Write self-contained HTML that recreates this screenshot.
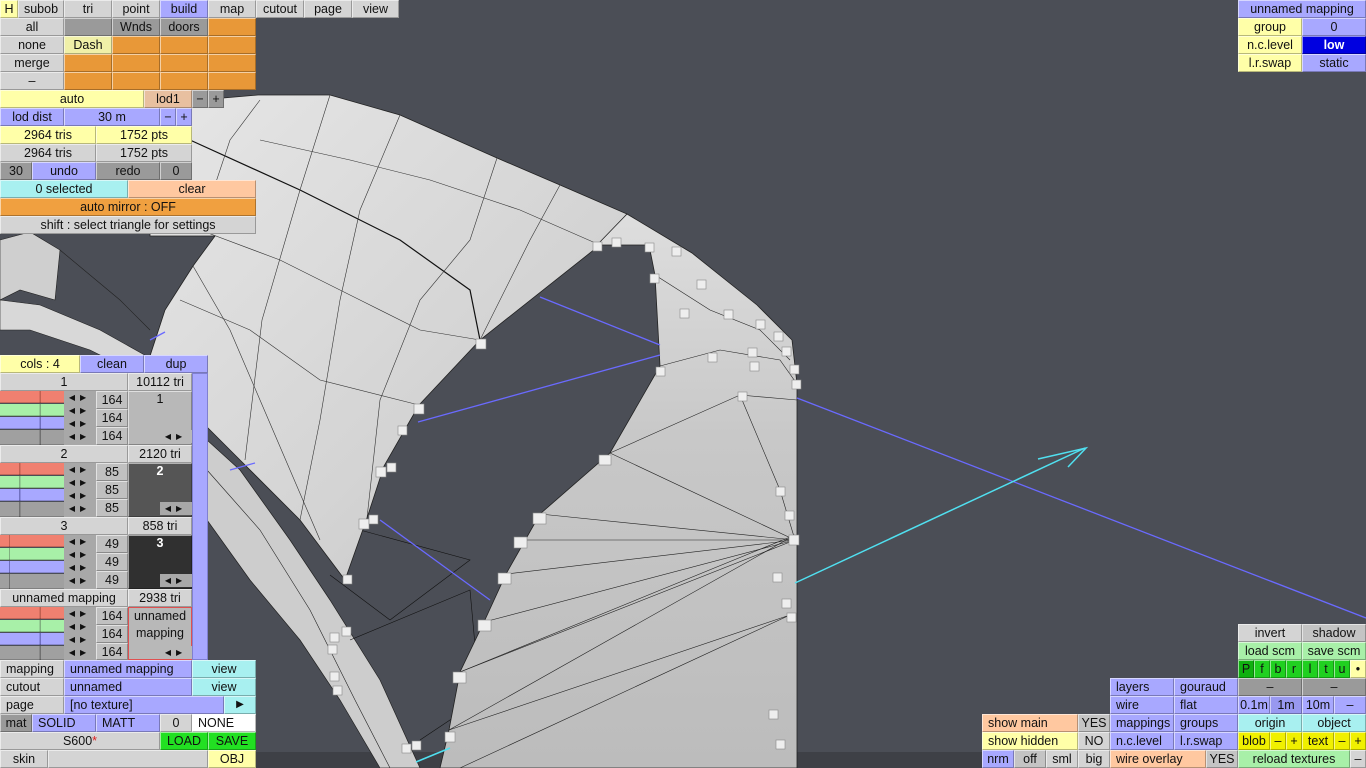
<!DOCTYPE html>
<html><head><meta charset="utf-8"><style>
*{margin:0;padding:0;box-sizing:border-box}
body{width:1366px;height:768px;overflow:hidden;background:#4b4e56;position:relative;font-family:"Liberation Sans",sans-serif;font-size:12.5px;color:#111}
svg{position:absolute;left:0;top:0}
.b{position:absolute;height:18px;line-height:16px;text-align:center;white-space:nowrap;overflow:hidden;background:#d4d4d4;border-top:1px solid rgba(255,255,255,.55);border-left:1px solid rgba(255,255,255,.55);border-bottom:1px solid rgba(0,0,0,.28);border-right:1px solid rgba(0,0,0,.28)}
.l{text-align:left;padding-left:5px}
.y{background:#ffffa8}.bl{background:#a8a8ff}.o{background:#e89838}.dg{background:#9a9a9a}.pe{background:#ffc8a0}.cy{background:#a8f0f0}.gr{background:#a8f0a8}.G{background:#22e022}.Y{background:#f0f000}.tan{background:#e8c0a0}.w{background:#fff}
.s{position:absolute;height:12px;border-bottom:1px solid rgba(0,0,0,.2)}
.ar{position:absolute;height:13px;width:32px;background:#a8a8a8;font-size:8px;line-height:13px;text-align:center;letter-spacing:5px;color:#111}
</style></head><body>
<svg width="1366" height="768" viewBox="0 0 1366 768">
<defs>
<linearGradient id="ga" x1="0" y1="0" x2="1" y2="1"><stop offset="0" stop-color="#e6e6e6"/><stop offset=".6" stop-color="#d4d4d4"/><stop offset="1" stop-color="#c4c4c4"/></linearGradient>
<linearGradient id="gb" x1="0" y1="0" x2="0" y2="1"><stop offset="0" stop-color="#dedede"/><stop offset=".4" stop-color="#c8c8c8"/><stop offset="1" stop-color="#bcbcbc"/></linearGradient>
</defs>
<rect x="0" y="752" width="1366" height="16" fill="#3e4046"/>
<polygon points="0,240 30,232 60,250 55,300 20,290 0,300" fill="#cfcfcf" stroke="#222" stroke-width=".6"/>
<polygon points="0,300 40,305 100,330 150,358 150,380 90,350 30,330 0,330" fill="#d8d8d8" stroke="#222" stroke-width=".6"/>
<polyline points="60,250 120,300 150,330" fill="none" stroke="#222" stroke-width=".6"/>
<polygon points="207,440 240,470 290,540 330,600 380,680 420,768 380,768 340,700 300,640 250,580 207,520" fill="#cdcdcd" stroke="#222" stroke-width=".7"/>
<polyline points="207,470 260,530 310,610 355,700 390,768" fill="none" stroke="#222" stroke-width=".6"/>
<polyline points="330,575 390,620 470,560 360,530" fill="none" stroke="#111" stroke-width=".6"/>
<polyline points="350,640 470,590 480,700 420,740" fill="none" stroke="#111" stroke-width=".6"/>
<polygon points="150,112 200,100 258,95 330,95 400,115 497,158 560,185 627,214 600,245 480,340 419,405 384,466 367,518 345,580 300,520 240,460 200,420 160,372 150,356 165,310 193,266 215,236 150,236" fill="url(#ga)" stroke="#222" stroke-width=".8"/>
<polyline points="190,140 300,190 400,240 470,290 480,340" fill="none" stroke="#111" stroke-width="1.2"/>
<polyline points="260,100 230,140 210,200" fill="none" stroke="#333" stroke-width=".6"/>
<polyline points="330,95 300,190 262,320 245,460" fill="none" stroke="#333" stroke-width=".6"/>
<polyline points="400,115 360,210 340,300 320,420 300,520" fill="none" stroke="#333" stroke-width=".6"/>
<polyline points="497,158 470,240 420,300 380,400 367,518" fill="none" stroke="#333" stroke-width=".6"/>
<polyline points="560,185 530,240 480,340" fill="none" stroke="#333" stroke-width=".6"/>
<polyline points="200,230 280,260 360,300 420,330 480,340" fill="none" stroke="#333" stroke-width=".6"/>
<polyline points="180,300 250,330 320,380 419,405" fill="none" stroke="#333" stroke-width=".6"/>
<polyline points="260,140 350,160 430,180 520,210 600,245" fill="none" stroke="#333" stroke-width=".6"/>
<polyline points="193,266 230,330 260,400 290,470 320,540" fill="none" stroke="#333" stroke-width=".6"/>
<polygon points="597,245 627,214 692,253 757,305 792,340 797,384 797,768 440,768 449,730 460,672 484,622 506,574 540,514 610,453 660,366 655,275 649,245" fill="url(#gb)" stroke="#222" stroke-width=".8"/>
<g stroke="#222" stroke-width=".6" fill="none">
<polyline points="655,275 710,310 760,330 790,360"/>
<polyline points="660,366 720,350 780,360 797,384"/>
<polyline points="610,453 740,395 797,400"/>
<polyline points="610,453 795,540 540,514"/>
<polyline points="522,540 795,540 506,574"/>
<polyline points="484,622 795,540 460,672"/>
<polyline points="460,672 795,535 449,730"/>
<polyline points="449,730 790,615 460,768"/>
<polyline points="740,395 780,490 795,540"/>
</g>
<g stroke="#6a6aff" stroke-width="1.3">
<line x1="540" y1="297" x2="660" y2="345"/>
<line x1="418" y1="422" x2="660" y2="355"/>
<line x1="797" y1="398" x2="1366" y2="618"/>
<line x1="380" y1="520" x2="490" y2="600"/>
<line x1="150" y1="340" x2="165" y2="332"/>
<line x1="230" y1="470" x2="255" y2="463"/>
</g>
<g stroke="#50e0f0" stroke-width="1.5" fill="none">
<line x1="795" y1="583" x2="1085" y2="448"/>
<polyline points="1038,459 1086,448 1068,467"/>
<line x1="416" y1="762" x2="450" y2="748"/>
</g>
<g fill="#eeeeee" stroke="#888" stroke-width=".6">
<rect x="593" y="242" width="9" height="9"/><rect x="612" y="238" width="9" height="9"/><rect x="645" y="243" width="9" height="9"/><rect x="672" y="247" width="9" height="9"/>
<rect x="650" y="274" width="9" height="9"/><rect x="697" y="280" width="9" height="9"/><rect x="680" y="309" width="9" height="9"/><rect x="724" y="310" width="9" height="9"/>
<rect x="756" y="320" width="9" height="9"/><rect x="774" y="332" width="9" height="9"/><rect x="708" y="353" width="9" height="9"/><rect x="748" y="348" width="9" height="9"/>
<rect x="782" y="347" width="9" height="9"/><rect x="790" y="365" width="9" height="9"/><rect x="792" y="380" width="9" height="9"/><rect x="656" y="367" width="9" height="9"/>
<rect x="738" y="392" width="9" height="9"/><rect x="750" y="362" width="9" height="9"/><rect x="476" y="339" width="10" height="10"/><rect x="414" y="404" width="10" height="10"/>
<rect x="398" y="426" width="9" height="9"/><rect x="376" y="467" width="10" height="10"/><rect x="387" y="463" width="9" height="9"/><rect x="359" y="519" width="10" height="10"/><rect x="369" y="515" width="9" height="9"/>
<rect x="343" y="575" width="9" height="9"/><rect x="599" y="455" width="12" height="10"/><rect x="533" y="513" width="13" height="11"/><rect x="514" y="537" width="13" height="11"/>
<rect x="498" y="573" width="13" height="11"/><rect x="478" y="620" width="13" height="11"/><rect x="453" y="672" width="13" height="11"/><rect x="445" y="732" width="10" height="10"/>
<rect x="776" y="487" width="9" height="9"/><rect x="785" y="511" width="9" height="9"/><rect x="789" y="535" width="10" height="10"/><rect x="773" y="573" width="9" height="9"/>
<rect x="782" y="599" width="9" height="9"/><rect x="787" y="613" width="9" height="9"/><rect x="769" y="710" width="9" height="9"/><rect x="776" y="740" width="9" height="9"/>
<rect x="330" y="633" width="9" height="9"/><rect x="342" y="627" width="9" height="9"/><rect x="328" y="645" width="9" height="9"/><rect x="330" y="672" width="9" height="9"/><rect x="333" y="686" width="9" height="9"/>
<rect x="402" y="744" width="9" height="9"/><rect x="412" y="741" width="9" height="9"/>
</g>
</svg>

<div class="b y" style="left:0;top:0;width:18px">H</div>
<div class="b" style="left:18px;top:0;width:46px">subob</div>
<div class="b" style="left:64px;top:0;width:48px">tri</div>
<div class="b" style="left:112px;top:0;width:48px">point</div>
<div class="b bl" style="left:160px;top:0;width:48px">build</div>
<div class="b" style="left:208px;top:0;width:48px">map</div>
<div class="b" style="left:256px;top:0;width:48px">cutout</div>
<div class="b" style="left:304px;top:0;width:48px">page</div>
<div class="b" style="left:352px;top:0;width:47px">view</div>

<div class="b" style="left:0;top:18px;width:64px">all</div>
<div class="b dg" style="left:64px;top:18px;width:48px"></div>
<div class="b dg" style="left:112px;top:18px;width:48px">Wnds</div>
<div class="b dg" style="left:160px;top:18px;width:48px">doors</div>
<div class="b o" style="left:208px;top:18px;width:48px"></div>
<div class="b" style="left:0;top:36px;width:64px">none</div>
<div class="b y" style="left:64px;top:36px;width:48px;background:#f0f0a8">Dash</div>
<div class="b o" style="left:112px;top:36px;width:48px"></div><div class="b o" style="left:160px;top:36px;width:48px"></div><div class="b o" style="left:208px;top:36px;width:48px"></div>
<div class="b" style="left:0;top:54px;width:64px">merge</div>
<div class="b o" style="left:64px;top:54px;width:48px"></div><div class="b o" style="left:112px;top:54px;width:48px"></div><div class="b o" style="left:160px;top:54px;width:48px"></div><div class="b o" style="left:208px;top:54px;width:48px"></div>
<div class="b" style="left:0;top:72px;width:64px">–</div>
<div class="b o" style="left:64px;top:72px;width:48px"></div><div class="b o" style="left:112px;top:72px;width:48px"></div><div class="b o" style="left:160px;top:72px;width:48px"></div><div class="b o" style="left:208px;top:72px;width:48px"></div>

<div class="b y" style="left:0;top:90px;width:144px">auto</div>
<div class="b tan" style="left:144px;top:90px;width:48px">lod1</div>
<div class="b dg" style="left:192px;top:90px;width:16px">−</div>
<div class="b dg" style="left:208px;top:90px;width:16px">+</div>
<div class="b bl" style="left:0;top:108px;width:64px">lod dist</div>
<div class="b bl" style="left:64px;top:108px;width:96px">30 m</div>
<div class="b bl" style="left:160px;top:108px;width:16px">−</div>
<div class="b bl" style="left:176px;top:108px;width:16px">+</div>
<div class="b y" style="left:0;top:126px;width:96px">2964 tris</div>
<div class="b y" style="left:96px;top:126px;width:96px">1752 pts</div>
<div class="b" style="left:0;top:144px;width:96px">2964 tris</div>
<div class="b" style="left:96px;top:144px;width:96px">1752 pts</div>
<div class="b dg" style="left:0;top:162px;width:32px">30</div>
<div class="b bl" style="left:32px;top:162px;width:64px">undo</div>
<div class="b dg" style="left:96px;top:162px;width:64px">redo</div>
<div class="b dg" style="left:160px;top:162px;width:32px">0</div>
<div class="b cy" style="left:0;top:180px;width:128px">0 selected</div>
<div class="b pe" style="left:128px;top:180px;width:128px">clear</div>
<div class="b" style="left:0;top:198px;width:256px;background:#f0a040">auto mirror : OFF</div>
<div class="b" style="left:0;top:216px;width:256px">shift : select triangle for settings</div>

<div class="b y" style="left:0;top:355px;width:80px">cols : 4</div>
<div class="b bl" style="left:80px;top:355px;width:64px">clean</div>
<div class="b bl" style="left:144px;top:355px;width:64px">dup</div>
<div style="position:absolute;left:192px;top:373px;width:16px;height:287px;background:#a8a8ff;border:1px solid #8080d0"></div>

<div class="b" style="left:0;top:373px;width:128px">1</div><div class="b" style="left:128px;top:373px;width:64px">10112 tri</div>
<div class="s" style="left:0;top:391px;width:64px;background:linear-gradient(90deg,#f08070 62%,#c06050 62%,#c06050 64%,#f08070 64%)"></div>
<div class="s" style="left:0;top:404px;width:64px;background:linear-gradient(90deg,#a8f0a8 62%,#80b080 62%,#80b080 64%,#a8f0a8 64%)"></div>
<div class="s" style="left:0;top:417px;width:64px;background:linear-gradient(90deg,#a8a8ff 62%,#7070c0 62%,#7070c0 64%,#a8a8ff 64%)"></div>
<div class="s" style="left:0;top:430px;width:64px;height:15px;background:linear-gradient(90deg,#a0a0a0 62%,#707070 62%,#707070 64%,#a0a0a0 64%)"></div>
<div class="ar" style="left:64px;top:391px">◀▶</div><div class="ar" style="left:64px;top:404px">◀▶</div><div class="ar" style="left:64px;top:417px">◀▶</div><div class="ar" style="left:64px;top:430px;height:15px">◀▶</div>
<div class="b" style="left:96px;top:391px;width:32px;background:#c0c0c0">164</div><div class="b" style="left:96px;top:409px;width:32px;background:#c0c0c0">164</div><div class="b" style="left:96px;top:427px;width:32px;background:#c0c0c0">164</div>
<div class="b" style="left:128px;top:391px;width:64px;height:54px;background:#b8b8b8;line-height:14px">1</div><div class="ar" style="left:160px;top:430px;background:#b8b8b8">◀▶</div>

<div class="b" style="left:0;top:445px;width:128px">2</div><div class="b" style="left:128px;top:445px;width:64px">2120 tri</div>
<div class="s" style="left:0;top:463px;width:64px;background:linear-gradient(90deg,#f08070 30%,#c06050 30%,#c06050 32%,#f08070 32%)"></div>
<div class="s" style="left:0;top:476px;width:64px;background:linear-gradient(90deg,#a8f0a8 30%,#80b080 30%,#80b080 32%,#a8f0a8 32%)"></div>
<div class="s" style="left:0;top:489px;width:64px;background:linear-gradient(90deg,#a8a8ff 30%,#7070c0 30%,#7070c0 32%,#a8a8ff 32%)"></div>
<div class="s" style="left:0;top:502px;width:64px;height:15px;background:linear-gradient(90deg,#a0a0a0 30%,#707070 30%,#707070 32%,#a0a0a0 32%)"></div>
<div class="ar" style="left:64px;top:463px">◀▶</div><div class="ar" style="left:64px;top:476px">◀▶</div><div class="ar" style="left:64px;top:489px">◀▶</div><div class="ar" style="left:64px;top:502px;height:15px">◀▶</div>
<div class="b" style="left:96px;top:463px;width:32px;background:#c0c0c0">85</div><div class="b" style="left:96px;top:481px;width:32px;background:#c0c0c0">85</div><div class="b" style="left:96px;top:499px;width:32px;background:#c0c0c0">85</div>
<div class="b" style="left:128px;top:463px;width:64px;height:54px;background:#555;color:#fff;font-weight:bold;line-height:14px">2</div><div class="ar" style="left:160px;top:502px">◀▶</div>

<div class="b" style="left:0;top:517px;width:128px">3</div><div class="b" style="left:128px;top:517px;width:64px">858 tri</div>
<div class="s" style="left:0;top:535px;width:64px;background:linear-gradient(90deg,#f08070 14%,#c06050 14%,#c06050 16%,#f08070 16%)"></div>
<div class="s" style="left:0;top:548px;width:64px;background:linear-gradient(90deg,#a8f0a8 14%,#80b080 14%,#80b080 16%,#a8f0a8 16%)"></div>
<div class="s" style="left:0;top:561px;width:64px;background:linear-gradient(90deg,#a8a8ff 14%,#7070c0 14%,#7070c0 16%,#a8a8ff 16%)"></div>
<div class="s" style="left:0;top:574px;width:64px;height:15px;background:linear-gradient(90deg,#a0a0a0 14%,#707070 14%,#707070 16%,#a0a0a0 16%)"></div>
<div class="ar" style="left:64px;top:535px">◀▶</div><div class="ar" style="left:64px;top:548px">◀▶</div><div class="ar" style="left:64px;top:561px">◀▶</div><div class="ar" style="left:64px;top:574px;height:15px">◀▶</div>
<div class="b" style="left:96px;top:535px;width:32px;background:#c0c0c0">49</div><div class="b" style="left:96px;top:553px;width:32px;background:#c0c0c0">49</div><div class="b" style="left:96px;top:571px;width:32px;background:#c0c0c0">49</div>
<div class="b" style="left:128px;top:535px;width:64px;height:54px;background:#303030;color:#fff;font-weight:bold;line-height:14px">3</div><div class="ar" style="left:160px;top:574px">◀▶</div>

<div class="b" style="left:0;top:589px;width:128px">unnamed mapping</div><div class="b" style="left:128px;top:589px;width:64px">2938 tri</div>
<div class="s" style="left:0;top:607px;width:64px;background:linear-gradient(90deg,#f08070 62%,#c06050 62%,#c06050 64%,#f08070 64%)"></div>
<div class="s" style="left:0;top:620px;width:64px;background:linear-gradient(90deg,#a8f0a8 62%,#80b080 62%,#80b080 64%,#a8f0a8 64%)"></div>
<div class="s" style="left:0;top:633px;width:64px;background:linear-gradient(90deg,#a8a8ff 62%,#7070c0 62%,#7070c0 64%,#a8a8ff 64%)"></div>
<div class="s" style="left:0;top:646px;width:64px;height:14px;background:linear-gradient(90deg,#a0a0a0 62%,#707070 62%,#707070 64%,#a0a0a0 64%)"></div>
<div class="ar" style="left:64px;top:607px">◀▶</div><div class="ar" style="left:64px;top:620px">◀▶</div><div class="ar" style="left:64px;top:633px">◀▶</div><div class="ar" style="left:64px;top:646px;height:14px">◀▶</div>
<div class="b" style="left:96px;top:607px;width:32px;background:#c0c0c0">164</div><div class="b" style="left:96px;top:625px;width:32px;background:#c0c0c0">164</div><div class="b" style="left:96px;top:643px;width:32px;height:17px;background:#c0c0c0">164</div>
<div class="b" style="left:128px;top:607px;width:64px;height:53px;background:#b8b8b8;border:1px solid #e05050;line-height:17px;white-space:normal">unnamed mapping</div><div class="ar" style="left:160px;top:646px;background:#b8b8b8">◀▶</div>

<div class="b l" style="left:0;top:660px;width:64px">mapping</div>
<div class="b bl l" style="left:64px;top:660px;width:128px">unnamed mapping</div>
<div class="b cy" style="left:192px;top:660px;width:64px">view</div>
<div class="b l" style="left:0;top:678px;width:64px">cutout</div>
<div class="b bl l" style="left:64px;top:678px;width:128px">unnamed</div>
<div class="b cy" style="left:192px;top:678px;width:64px">view</div>
<div class="b l" style="left:0;top:696px;width:64px">page</div>
<div class="b bl l" style="left:64px;top:696px;width:160px">[no texture]</div>
<div class="b cy" style="left:224px;top:696px;width:32px;font-size:10px">▶</div>
<div class="b dg" style="left:0;top:714px;width:32px">mat</div>
<div class="b bl l" style="left:32px;top:714px;width:64px">SOLID</div>
<div class="b bl l" style="left:96px;top:714px;width:64px">MATT</div>
<div class="b" style="left:160px;top:714px;width:32px">0</div>
<div class="b w l" style="left:192px;top:714px;width:64px">NONE</div>
<div class="b" style="left:0;top:732px;width:160px">S600<span style="color:#e02020">*</span></div>
<div class="b G" style="left:160px;top:732px;width:48px">LOAD</div>
<div class="b G" style="left:208px;top:732px;width:48px">SAVE</div>
<div class="b" style="left:0;top:750px;width:48px">skin</div>
<div class="b" style="left:48px;top:750px;width:160px"></div>
<div class="b y" style="left:208px;top:750px;width:48px">OBJ</div>

<div class="b bl" style="left:1238px;top:0;width:128px">unnamed mapping</div>
<div class="b y" style="left:1238px;top:18px;width:64px">group</div>
<div class="b bl" style="left:1302px;top:18px;width:64px">0</div>
<div class="b y" style="left:1238px;top:36px;width:64px">n.c.level</div>
<div class="b" style="left:1302px;top:36px;width:64px;background:#0000e0;color:#fff;font-weight:bold">low</div>
<div class="b y" style="left:1238px;top:54px;width:64px">l.r.swap</div>
<div class="b bl" style="left:1302px;top:54px;width:64px">static</div>

<div class="b" style="left:1238px;top:624px;width:64px">invert</div>
<div class="b" style="left:1302px;top:624px;width:64px;background:#c4c4c4">shadow</div>
<div class="b gr" style="left:1238px;top:642px;width:64px">load scm</div>
<div class="b gr" style="left:1302px;top:642px;width:64px">save scm</div>
<div class="b G" style="left:1238px;top:660px;width:16px;background:#10b010">P</div>
<div class="b G" style="left:1254px;top:660px;width:16px;background:#20d020">f</div>
<div class="b G" style="left:1270px;top:660px;width:16px;background:#20d020">b</div>
<div class="b G" style="left:1286px;top:660px;width:16px;background:#20d020">r</div>
<div class="b G" style="left:1302px;top:660px;width:16px;background:#20d020">l</div>
<div class="b G" style="left:1318px;top:660px;width:16px;background:#20d020">t</div>
<div class="b G" style="left:1334px;top:660px;width:16px;background:#20d020">u</div>
<div class="b y" style="left:1350px;top:660px;width:16px">•</div>
<div class="b bl l" style="left:1110px;top:678px;width:64px">layers</div>
<div class="b bl l" style="left:1174px;top:678px;width:64px">gouraud</div>
<div class="b dg" style="left:1238px;top:678px;width:64px">–</div>
<div class="b dg" style="left:1302px;top:678px;width:64px">–</div>
<div class="b bl l" style="left:1110px;top:696px;width:64px">wire</div>
<div class="b bl l" style="left:1174px;top:696px;width:64px">flat</div>
<div class="b bl" style="left:1238px;top:696px;width:32px">0.1m</div>
<div class="b bl" style="left:1270px;top:696px;width:32px;background:#9898f0">1m</div>
<div class="b bl" style="left:1302px;top:696px;width:32px">10m</div>
<div class="b bl" style="left:1334px;top:696px;width:32px">–</div>
<div class="b pe l" style="left:982px;top:714px;width:96px">show main</div>
<div class="b" style="left:1078px;top:714px;width:32px;background:#c4c4c4">YES</div>
<div class="b bl l" style="left:1110px;top:714px;width:64px">mappings</div>
<div class="b bl l" style="left:1174px;top:714px;width:64px">groups</div>
<div class="b cy" style="left:1238px;top:714px;width:64px">origin</div>
<div class="b cy" style="left:1302px;top:714px;width:64px">object</div>
<div class="b y l" style="left:982px;top:732px;width:96px">show hidden</div>
<div class="b" style="left:1078px;top:732px;width:32px">NO</div>
<div class="b bl l" style="left:1110px;top:732px;width:64px">n.c.level</div>
<div class="b bl l" style="left:1174px;top:732px;width:64px">l.r.swap</div>
<div class="b Y" style="left:1238px;top:732px;width:32px">blob</div>
<div class="b Y" style="left:1270px;top:732px;width:16px">–</div>
<div class="b Y" style="left:1286px;top:732px;width:16px">+</div>
<div class="b Y" style="left:1302px;top:732px;width:32px">text</div>
<div class="b Y" style="left:1334px;top:732px;width:16px">–</div>
<div class="b Y" style="left:1350px;top:732px;width:16px">+</div>
<div class="b bl" style="left:982px;top:750px;width:32px">nrm</div>
<div class="b" style="left:1014px;top:750px;width:32px;background:#c4c4c4">off</div>
<div class="b" style="left:1046px;top:750px;width:32px">sml</div>
<div class="b" style="left:1078px;top:750px;width:32px">big</div>
<div class="b pe l" style="left:1110px;top:750px;width:96px">wire overlay</div>
<div class="b" style="left:1206px;top:750px;width:32px;background:#c4c4c4">YES</div>
<div class="b gr" style="left:1238px;top:750px;width:112px">reload textures</div>
<div class="b" style="left:1350px;top:750px;width:16px">–</div>
</body></html>
